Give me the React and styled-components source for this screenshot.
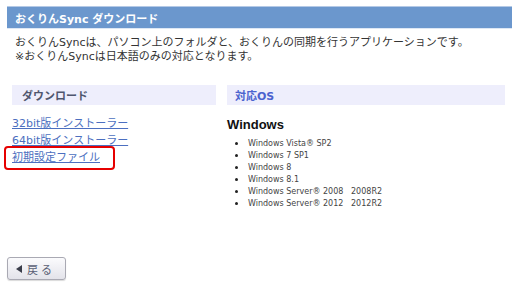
import React from "react";
import styled, { createGlobalStyle } from "styled-components";

const GlobalStyle = createGlobalStyle`
  html, body {
    margin: 0;
    padding: 0;
    background: #ffffff;
  }
  body {
    font-family: "DejaVu Sans", "Noto Sans CJK JP", sans-serif;
  }
`;

const Page = styled.div`
  width: 512px;
  height: 294px;
  box-sizing: border-box;
  padding: 6px 0 0 7px;
  display: flex;
  flex-direction: column;
`;

const TitleBar = styled.div`
  height: 21px;
  background: #6b97cd;
  border-top: 1px solid #b4c9e6;
  border-bottom: 1px solid #dde7f4;
  display: flex;
  align-items: center;
  padding-left: 8px;
  color: #ffffff;
  font-family: "DejaVu Sans", "Noto Sans CJK JP", sans-serif;
  font-size: 11px;
  font-weight: bold;
`;

const Intro = styled.div`
  margin-top: 7px;
  padding-left: 8px;
  font-family: "DejaVu Sans", "Noto Sans CJK JP", sans-serif;
  font-size: 11px;
  line-height: 14px;
  color: #333333;
`;

const Columns = styled.div`
  margin-top: 21px;
  padding: 0 7px 0 5px;
  display: grid;
  grid-template-columns: 204px 1fr;
  column-gap: 11px;
`;

const PanelHead = styled.div`
  height: 20px;
  background: #eeeefc;
  display: flex;
  align-items: center;
  padding-left: ${(p) => p.$indent}px;
  font-family: "DejaVu Sans", "Noto Sans CJK JP", sans-serif;
  font-size: 11px;
  font-weight: bold;
  color: ${(p) => p.$color};
`;

const LinkList = styled.div`
  margin-top: 12px;
  display: flex;
  flex-direction: column;
  align-items: flex-start;
  gap: 3px;
`;

const DlLink = styled.a`
  position: relative;
  font-family: "DejaVu Sans", "Noto Sans CJK JP", sans-serif;
  font-size: 11px;
  line-height: 14px;
  color: #4c6fc0;
  text-decoration: underline;
  cursor: pointer;

  &::after {
    content: "";
    display: ${(p) => (p.$marked ? "block" : "none")};
    position: absolute;
    left: -8px;
    top: -5px;
    right: -15px;
    bottom: -5px;
    border: 2px solid #e60000;
    border-radius: 4px;
  }
`;

const OsTitle = styled.h3`
  margin: 12px 0 0 0;
  font-family: "Liberation Sans", "Noto Sans CJK JP", sans-serif;
  font-size: 13px;
  line-height: 16px;
  font-weight: bold;
  color: #111111;
`;

const OsList = styled.ul`
  margin: 4px 0 0 0;
  padding: 0 0 0 21px;
  list-style: disc;
  font-family: "DejaVu Sans", "Noto Sans CJK JP", sans-serif;
  font-size: 8px;
  line-height: 12px;
  color: #444444;

  li {
    height: 12px;
  }

  li::marker {
    color: #222222;
    font-size: 11px;
  }
`;

const Spacer = styled.div`
  flex: 1;
`;

const BackButton = styled.button`
  align-self: flex-start;
  margin-bottom: 14px;
  width: 59px;
  height: 23px;
  box-sizing: border-box;
  padding: 0 0 0 8px;
  display: flex;
  align-items: center;
  gap: 5px;
  border: 1px solid #a9a9b3;
  border-radius: 3px;
  background: linear-gradient(#fbfbfd, #e3e3ea);
  box-shadow: 0 1px 1px rgba(0, 0, 0, 0.15);
  font-family: "DejaVu Sans", "Noto Sans CJK JP", sans-serif;
  font-size: 11px;
  letter-spacing: 3px;
  color: #5a5f75;
  cursor: pointer;
`;

const Arrow = styled.span`
  width: 0;
  height: 0;
  border-top: 4px solid transparent;
  border-bottom: 4px solid transparent;
  border-right: 6px solid #3a3d4a;
`;

const osItems = [
  "Windows Vista® SP2",
  "Windows 7 SP1",
  "Windows 8",
  "Windows 8.1",
  "Windows Server® 2008\u00a0\u00a0\u00a02008R2",
  "Windows Server® 2012\u00a0\u00a0\u00a02012R2",
];

export default function App() {
  return (
    <>
      <GlobalStyle />
      <Page>
        <TitleBar>おくりんSync ダウンロード</TitleBar>
        <Intro>
          おくりんSyncは、パソコン上のフォルダと、おくりんの同期を行うアプリケーションです。
          <br />
          ※おくりんSyncは日本語のみの対応となります。
        </Intro>
        <Columns>
          <div>
            <PanelHead $indent={10} $color="#4f566e">ダウンロード</PanelHead>
            <LinkList>
              <DlLink>32bit版インストーラー</DlLink>
              <DlLink>64bit版インストーラー</DlLink>
              <DlLink $marked>初期設定ファイル</DlLink>
            </LinkList>
          </div>
          <div>
            <PanelHead $indent={8} $color="#4b63cf">対応OS</PanelHead>
            <OsTitle>Windows</OsTitle>
            <OsList>
              {osItems.map((item) => (
                <li key={item}>{item}</li>
              ))}
            </OsList>
          </div>
        </Columns>
        <Spacer />
        <BackButton>
          <Arrow />
          戻る
        </BackButton>
      </Page>
    </>
  );
}
